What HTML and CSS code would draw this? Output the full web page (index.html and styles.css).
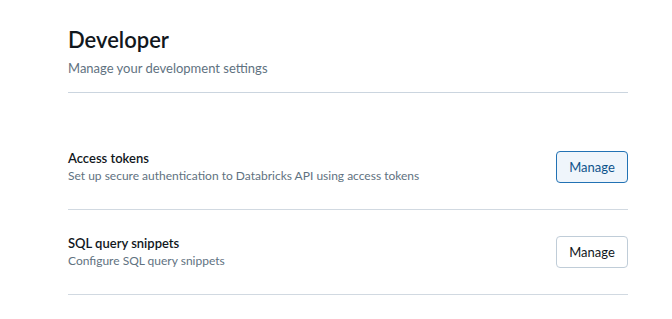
FILE: index.html
```html
<!DOCTYPE html>
<html lang="en">
<head>
    <meta charset="UTF-8">
    <meta name="viewport" content="width=device-width, initial-scale=1.0">
    <title>Developer</title>
    <link rel="stylesheet" href="styles.css">
</head>
<body>
    <div class="page">
        <div class="header">
            <h1 class="title">Developer</h1>
            <p class="subtitle">Manage your development settings</p>
        </div>
        <div class="settings">
            <div class="row">
                <div class="row-text">
                    <div class="row-title">Access tokens</div>
                    <div class="row-desc">Set up secure authentication to Databricks API using access tokens</div>
                </div>
                <button class="button active">Manage</button>
            </div>
            <div class="row">
                <div class="row-text">
                    <div class="row-title">SQL query snippets</div>
                    <div class="row-desc">Configure SQL query snippets</div>
                </div>
                <button class="button">Manage</button>
            </div>
        </div>
    </div>
</body>
</html>
```

FILE: styles.css
```css
body {
    font-family: Lato, "Open Sans", sans-serif;
    background-color: #ffffff;
    color: #11171c;
    margin: 0;
}

.page {
    margin-left: 68px;
    width: 560px;
    padding-top: 26px;
}

.header {
    padding-bottom: 14px;
    border-bottom: 1px solid #cbd5df;
}

.title {
    font-size: 22px;
    font-weight: 600;
    line-height: 28px;
    margin: 0 0 4px 0;
}

.subtitle {
    font-size: 13px;
    line-height: 20px;
    color: #5f7281;
    margin: 0;
}

.settings {
    margin-top: 32px;
}

.row {
    display: flex;
    align-items: center;
    justify-content: space-between;
    padding: 24px 0;
    border-bottom: 1px solid #d1d9e1;
}

.row-title {
    font-size: 13px;
    font-weight: 600;
    line-height: 18px;
}

.row-desc {
    font-size: 12px;
    line-height: 18px;
    color: #5f7281;
}

.button {
    font-family: inherit;
    font-size: 13px;
    height: 32px;
    width: 72px;
    background-color: #ffffff;
    color: #11171c;
    border: 1px solid #c0cdd8;
    border-radius: 4px;
    cursor: pointer;
}

.button.active {
    background-color: #eff5fb;
    border-color: #2272b4;
    color: #0e538b;
}
```
